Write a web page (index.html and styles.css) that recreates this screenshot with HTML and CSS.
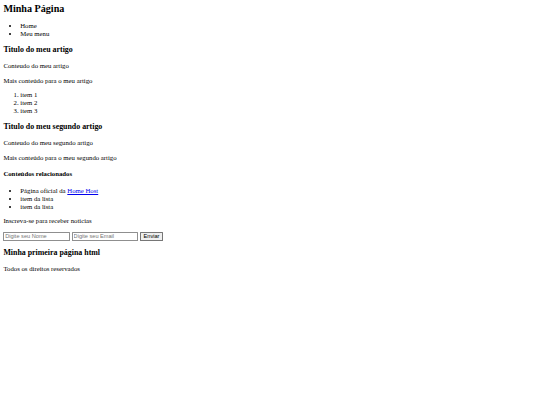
FILE: index.html
```html
<!DOCTYPE html>
<html lang="pt-BR">
<head>
<meta charset="utf-8">
<title>Minha Página</title>
<link rel="stylesheet" href="styles.css">
</head>
<body class="page">
<header class="site-header">
  <h1 class="site-title">Minha Página</h1>
  <nav class="site-nav">
    <ul class="list">
      <li>Home</li>
      <li>Meu menu</li>
    </ul>
  </nav>
</header>
<main class="content">
  <article class="article">
    <h3 class="heading">Titulo do meu artigo</h3>
    <p class="text">Conteudo do meu artigo</p>
    <p class="text">Mais conteúdo para o meu artigo</p>
    <ol class="list">
      <li>item 1</li>
      <li>item 2</li>
      <li>item 3</li>
    </ol>
  </article>
  <article class="article">
    <h3 class="heading">Titulo do meu segundo artigo</h3>
    <p class="text">Conteudo do meu segundo artigo</p>
    <p class="text">Mais conteúdo para o meu segundo artigo</p>
  </article>
  <aside class="related">
    <h4 class="subheading">Conteúdos relacionados</h4>
    <ul class="list">
      <li>Página oficial da <a class="link" href="#">Home Host</a></li>
      <li>item da lista</li>
      <li>item da lista</li>
    </ul>
  </aside>
</main>
<section class="newsletter">
  <p class="text">Inscreva-se para receber noticias</p>
  <form class="form">
    <input class="field" type="text" placeholder="Digite seu Nome">
    <input class="field" type="email" placeholder="Digite seu Email">
    <button class="btn" type="button">Enviar</button>
  </form>
</section>
<footer class="site-footer">
  <h3 class="heading">Minha primeira página html</h3>
  <p class="text">Todos os direitos reservados</p>
</footer>
</body>
</html>
```

FILE: styles.css
```css
html {
  background: #fff;
}
.page {
  margin: 3.375px;
  font-family: "Liberation Serif", "Times New Roman", serif;
  font-size: 6.75px;
  line-height: 1.15;
  color: #000;
}
.site-title {
  font-size: 10.125px;
  font-weight: bold;
  margin: 0;
}
.list {
  margin: 6.75px 0;
  padding-left: 16.875px;
}
.heading {
  font-size: 7.9px;
  font-weight: bold;
  margin: 7.9px 0;
}
.subheading {
  font-size: 6.75px;
  font-weight: bold;
  margin: 8.98px 0;
}
.text {
  margin: 6.75px 0;
}
.link {
  color: #0000ee;
  text-decoration: underline;
}
.form {
  margin: 0;
  display: flex;
  align-items: stretch;
  gap: 1.7px;
}
.field {
  box-sizing: border-box;
  width: 66.7px;
  height: 8.86px;
  font-family: "Liberation Sans", Arial, sans-serif;
  font-size: 5.625px;
  padding: 0 0.84px;
  border: 0.42px solid #8f8f8f;
  border-radius: 0.5px;
  margin: 0;
  background: #fff;
  color: #000;
}
.field::placeholder {
  color: #757575;
}
.btn {
  box-sizing: border-box;
  width: 22.8px;
  height: 8.86px;
  font-family: "Liberation Sans", Arial, sans-serif;
  font-size: 5.625px;
  padding: 0;
  margin: 0;
  border: 0.42px solid #767676;
  border-radius: 0.5px;
  background: #efefef;
  color: #000;
}
```
